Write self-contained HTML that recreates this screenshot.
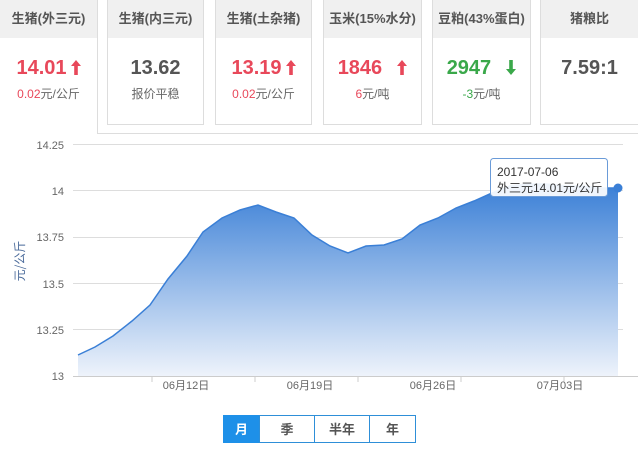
<!DOCTYPE html>
<html><head><meta charset="utf-8"><style>
body{margin:0;width:638px;height:451px;background:#fff;font-family:"Liberation Sans","Microsoft YaHei","Noto Sans CJK SC",sans-serif;position:relative;overflow:hidden}
.card{position:absolute;top:0;width:97px;height:125px;border:1px solid #ddd;border-top:none;box-sizing:border-box;text-align:center;background:#fff}
.card .h{height:38px;background:#f0f0f0;line-height:38px;font-size:13px;font-weight:bold;color:#555}
.card .v{margin-top:17px;font-size:20px;font-weight:bold;line-height:26px}
.card .s{font-size:12px;color:#666;margin-top:4px}
.r{color:#e8485a}.g{color:#3aa84a}.d{color:#555}
.btn{position:absolute;top:415px;height:28px;line-height:28px;text-align:center;font-size:13px;font-weight:bold;color:#555;border:1px solid #2e8fd8;box-sizing:border-box;background:#fff}
svg.a{vertical-align:-1px;margin-left:4px}
</style></head><body>
<div style="position:absolute;left:97px;top:133px;width:541px;height:1px;background:#ddd"></div>
<div style="position:absolute;left:97px;top:0;width:1px;height:134px;background:#ddd"></div>
<div class="card" style="left:0;width:97px;border:none;height:132px"><div class="h">生猪(外三元)</div><div class="v r">14.01<svg class="a" width="10" height="15" viewBox="0 0 10 15"><path d="M5,0 L10,6 L6.8,6 L6.8,15 L3.2,15 L3.2,6 L0,6 Z" fill="#e8485a"/></svg></div><div class="s"><span class="r">0.02</span>元/公斤</div></div>
<div class="card" style="left:107px"><div class="h">生猪(内三元)</div><div class="v d">13.62</div><div class="s">报价平稳</div></div>
<div class="card" style="left:215px"><div class="h">生猪(土杂猪)</div><div class="v r">13.19<svg class="a" width="10" height="15" viewBox="0 0 10 15"><path d="M5,0 L10,6 L6.8,6 L6.8,15 L3.2,15 L3.2,6 L0,6 Z" fill="#e8485a"/></svg></div><div class="s"><span class="r">0.02</span>元/公斤</div></div>
<div class="card" style="left:323px;width:99px"><div class="h">玉米(15%水分)</div><div class="v r">1846 &nbsp;<svg class="a" width="10" height="15" viewBox="0 0 10 15"><path d="M5,0 L10,6 L6.8,6 L6.8,15 L3.2,15 L3.2,6 L0,6 Z" fill="#e8485a"/></svg></div><div class="s"><span class="r">6</span>元/吨</div></div>
<div class="card" style="left:432px;width:99px"><div class="h">豆粕(43%蛋白)</div><div class="v g">2947 &nbsp;<svg class="a" width="10" height="15" viewBox="0 0 10 15"><path d="M5,15 L10,9 L6.8,9 L6.8,0 L3.2,0 L3.2,9 L0,9 Z" fill="#3aa84a"/></svg></div><div class="s"><span class="g">-3</span>元/吨</div></div>
<div class="card" style="left:540px;width:98px;border-right:none"><div class="h">猪粮比</div><div class="v d">7.59:1</div></div>
<svg style="position:absolute;left:0;top:0" width="638" height="451">
<defs><linearGradient id="gr" x1="0" y1="0" x2="0" y2="1"><stop offset="0" stop-color="#3a7fd6"/><stop offset="1" stop-color="#eef3fb"/></linearGradient></defs>
<g stroke="#ddd" stroke-width="1">
<line x1="73" y1="144.5" x2="623" y2="144.5"/><line x1="73" y1="190.5" x2="623" y2="190.5"/><line x1="73" y1="237.5" x2="623" y2="237.5"/><line x1="73" y1="283.5" x2="623" y2="283.5"/><line x1="73" y1="329.5" x2="623" y2="329.5"/>
</g>
<path d="M78,355 L95,347 L113,336 L132,321 L150,305 L168,279 L187,256 L203,232 L222,218 L240,210 L258,205 L276,212 L294,218 L312,235 L330,246 L348,253 L366,246 L384,245 L402,239 L420,225 L438,218 L456,208 L474,201 L492,193 L510,186 L528,184 L546,184 L564,186 L582,186 L600,188 L618,188 L618,376 L78,376 Z" fill="url(#gr)"/>
<path d="M78,355 L95,347 L113,336 L132,321 L150,305 L168,279 L187,256 L203,232 L222,218 L240,210 L258,205 L276,212 L294,218 L312,235 L330,246 L348,253 L366,246 L384,245 L402,239 L420,225 L438,218 L456,208 L474,201 L492,193 L510,186 L528,184 L546,184 L564,186 L582,186 L600,188 L618,188" fill="none" stroke="#3a7fd6" stroke-width="1.5"/>
<line x1="73" y1="376.5" x2="638" y2="376.5" stroke="#ccc"/>
<g stroke="#ccc"><line x1="152" y1="376" x2="152" y2="382"/><line x1="255" y1="376" x2="255" y2="382"/><line x1="358" y1="376" x2="358" y2="382"/><line x1="461" y1="376" x2="461" y2="382"/><line x1="564" y1="376" x2="564" y2="382"/></g>
<g font-size="11" fill="#666" text-anchor="end" font-family="Liberation Sans,sans-serif">
<text x="64" y="149">14.25</text><text x="64" y="195">14</text><text x="64" y="241">13.75</text><text x="64" y="288">13.5</text><text x="64" y="334">13.25</text><text x="64" y="380">13</text></g>
<g font-size="11" fill="#666" text-anchor="middle" font-family="Liberation Sans,Noto Sans CJK SC,sans-serif">
<text x="186" y="389">06月12日</text><text x="310" y="389">06月19日</text><text x="433" y="389">06月26日</text><text x="560" y="389">07月03日</text></g>
<text transform="translate(24,261) rotate(-90)" text-anchor="middle" font-size="12" fill="#4a6a9a" font-family="Noto Sans CJK SC,sans-serif">元/公斤</text>
<rect x="490.5" y="158.5" width="117" height="38" rx="3" fill="rgba(255,255,255,0.92)" stroke="#6a9bd8"/>
<text x="497" y="176" font-size="12" fill="#333" font-family="Liberation Sans,Noto Sans CJK SC,sans-serif">2017-07-06</text>
<text x="497" y="192" font-size="12" fill="#333" font-family="Liberation Sans,Noto Sans CJK SC,sans-serif">外三元14.01元/公斤</text>
<circle cx="618" cy="188" r="4.5" fill="#3a7fd6"/>
</svg>
<div class="btn" style="left:223px;width:37px;background:#1e90e8;color:#fff;border-color:#1e90e8">月</div>
<div class="btn" style="left:259px;width:56px">季</div>
<div class="btn" style="left:314px;width:56px">半年</div>
<div class="btn" style="left:369px;width:47px">年</div>
</body></html>
